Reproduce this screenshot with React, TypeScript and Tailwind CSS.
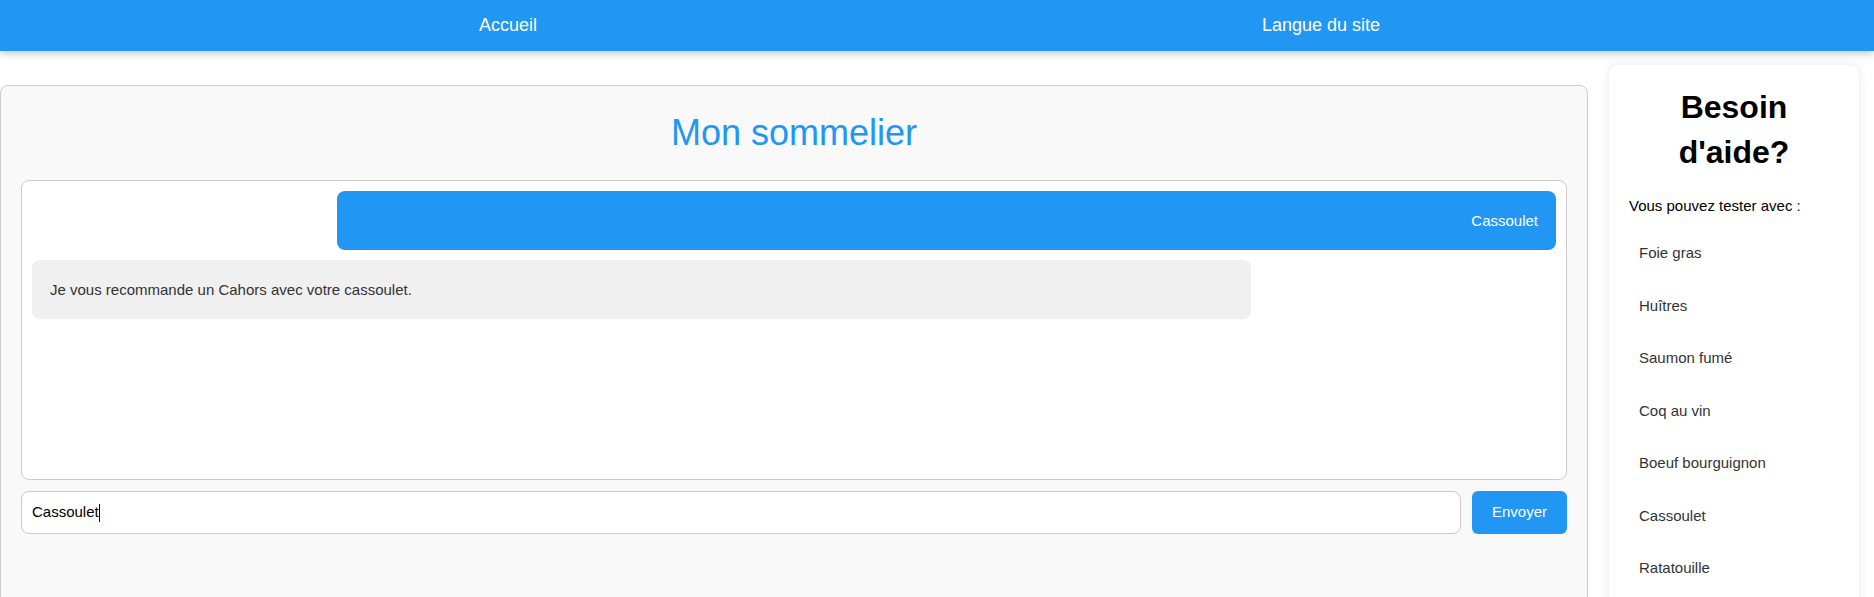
const suggestions = [
  "Foie gras",
  "Huîtres",
  "Saumon fumé",
  "Coq au vin",
  "Boeuf bourguignon",
  "Cassoulet",
  "Ratatouille",
];

function Navbar() {
  return (
    <nav className="relative z-10 h-[51px] bg-[#2196F3] shadow-[0_2px_8px_rgba(0,0,0,0.25)] flex items-center pl-[479px] gap-[725px] text-white text-[18px]">
      <a href="#">Accueil</a>
      <a href="#">Langue du site</a>
    </nav>
  );
}

function Chat() {
  return (
    <main className="flex-1 mt-5 border border-[#ccc] rounded-lg bg-[#f9f9f9] px-5 pb-20">
      <h1 className="mt-[26px] text-center text-[#2196F3] text-[36px] leading-[41px]">
        Mon sommelier
      </h1>
      <div className="mt-[27px] h-[300px] bg-white border border-[#ccc] rounded-lg p-[10px] flex flex-col gap-[10px] text-[15px]">
        <div className="self-end w-[80%] bg-[#2196F3] text-white text-right rounded-lg py-5 px-[18px] leading-[19px]">
          Cassoulet
        </div>
        <div className="self-start w-[80%] bg-[#f0f0f0] text-[#333] rounded-lg py-5 px-[18px] leading-[19px]">
          Je vous recommande un Cahors avec votre cassoulet.
        </div>
      </div>
      <div className="mt-[11px] flex gap-[11px]">
        <div className="flex-1 h-[43px] bg-white border border-[#ccc] rounded-lg px-[10px] flex items-center text-[15px] text-black">
          Cassoulet
          <span className="w-px h-[18px] bg-black" />
        </div>
        <button className="w-[95px] h-[43px] rounded-md bg-[#2196F3] text-white text-[15px]">
          Envoyer
        </button>
      </div>
    </main>
  );
}

function HelpPanel() {
  return (
    <aside className="w-[250px] bg-white rounded-[10px] shadow-[0_0_10px_rgba(0,0,0,0.1)] p-5 pb-10">
      <h2 className="text-center text-[32px] font-bold leading-[45px] text-black">
        Besoin d'aide?
      </h2>
      <p className="mt-[22px] text-[15px] leading-[17px] text-black">
        Vous pouvez tester avec :
      </p>
      <ul className="mt-[13px]">
        {suggestions.map((s) => (
          <li key={s} className="h-[52.5px] flex items-center pl-[10px] text-[15px] text-[#333]">
            {s}
          </li>
        ))}
      </ul>
    </aside>
  );
}

export default function App() {
  return (
    <div className="min-h-screen bg-white font-['Liberation_Sans',Arial,sans-serif]">
      <Navbar />
      <div className="flex items-start pt-[14px] pr-[15px] gap-[21px]">
        <Chat />
        <HelpPanel />
      </div>
    </div>
  );
}
